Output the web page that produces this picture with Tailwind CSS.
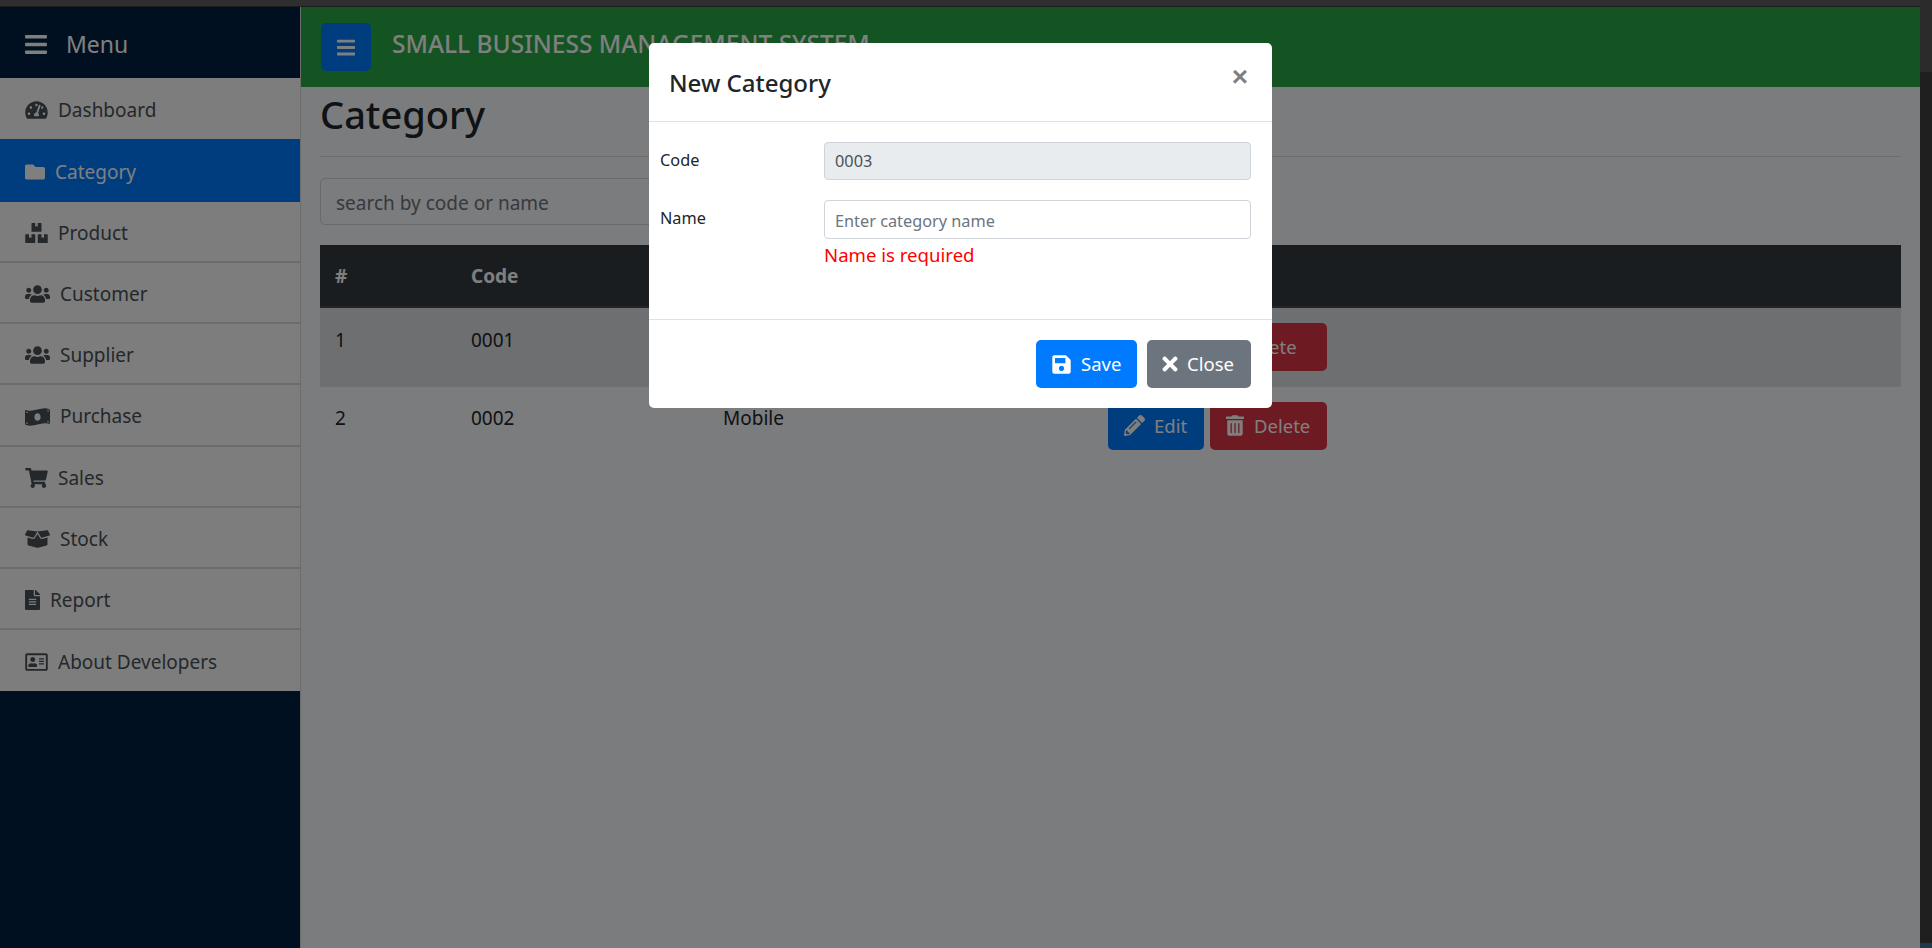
<!DOCTYPE html>
<html lang="en">

<head>
    <meta charset="UTF-8">
    <meta name="viewport" content="width=device-width, initial-scale=1.0">
    <script src="https://cdn.jsdelivr.net/npm/@tailwindcss/browser@4"></script>
    <title>Category</title>
</head>

<body class="font-['Noto_Sans',sans-serif] text-[#212529] bg-white">
    <div class="h-[948px] w-[1932px] overflow-hidden flex">
        <div class="relative w-[1920px] shrink-0 flex flex-col">
            <div class="h-[7px] bg-[#5e5e5e] border-b border-[#3a3a3a]"></div>
            <div class="flex flex-1 min-h-0">
                <!-- sidebar -->
                <aside class="w-[301px] shrink-0 bg-[#002040] border-r border-[#d8d8d8]">
                    <div class="h-[71px] flex items-center pl-[25px] pt-[3px] text-white">
                        <svg class="w-[22px] h-[25px] fill-current" viewBox="0 0 448 512"><path d="M16 132h416c8.837 0 16-7.163 16-16V76c0-8.837-7.163-16-16-16H16C7.163 60 0 67.163 0 76v40c0 8.837 7.163 16 16 16zm0 160h416c8.837 0 16-7.163 16-16v-40c0-8.837-7.163-16-16-16H16c-8.837 0-16 7.163-16 16v40c0 8.837 7.163 16 16 16zm0 160h416c8.837 0 16-7.163 16-16v-40c0-8.837-7.163-16-16-16H16c-8.837 0-16 7.163-16 16v40c0 8.837 7.163 16 16 16z"/></svg>
                        <span class="ml-[19px] text-[23px]">Menu</span>
                    </div>
                    <nav class="text-[19px] text-[#495057]">
                        <a class="h-[61px] flex items-center pl-[25px] pt-[3px] bg-[#fbfbfb] gap-[10px]">
                            <svg class="w-[23px] h-[20px] fill-current" viewBox="0 0 576 512"><path d="M288 32C128.94 32 0 160.94 0 320c0 52.8 14.25 102.26 39.06 144.8 5.61 9.62 16.3 15.2 27.44 15.2h443c11.14 0 21.83-5.58 27.44-15.2C561.75 422.26 576 372.8 576 320c0-159.06-128.94-288-288-288zm0 64c14.71 0 26.58 10.13 30.32 23.65-1.11 2.26-2.64 4.23-3.45 6.67l-9.22 27.67c-5.13 3.49-10.97 6.01-17.64 6.01-17.67 0-32-14.33-32-32S270.33 96 288 96zM96 384c-17.67 0-32-14.33-32-32s14.33-32 32-32 32 14.33 32 32-14.33 32-32 32zm48-160c-17.67 0-32-14.33-32-32s14.33-32 32-32 32 14.33 32 32-14.33 32-32 32zm246.77-72.41l-61.33 184C343.13 347.33 352 364.54 352 384c0 11.72-3.38 22.55-8.88 32H232.88c-5.5-9.45-8.88-20.28-8.88-32 0-33.94 26.5-61.43 59.9-63.59l61.34-184.01c4.17-12.56 17.73-19.45 30.36-15.17 12.57 4.19 19.35 17.79 15.17 30.36zm14.66 57.2l15.52-46.55c3.47-1.29 7.13-2.23 11.05-2.23 17.67 0 32 14.33 32 32s-14.33 32-32 32c-11.38-.01-20.89-6.28-26.57-15.22zM480 384c-17.67 0-32-14.33-32-32s14.33-32 32-32 32 14.33 32 32-14.33 32-32 32z"/></svg>
                            <span>Dashboard</span>
                        </a>
                        <a class="h-[63px] flex items-center pl-[25px] pt-[3px] bg-[#007bff] text-white gap-[10px]">
                            <svg class="w-[20px] h-[20px] fill-current" viewBox="0 0 512 512"><path d="M464 128H272l-64-64H48C21.49 64 0 85.49 0 112v288c0 26.51 21.49 48 48 48h416c26.51 0 48-21.49 48-48V176c0-26.51-21.49-48-48-48z"/></svg>
                            <span>Category</span>
                        </a>
                        <a class="h-[61px] flex items-center pl-[25px] pt-[3px] bg-[#fbfbfb] border-b-2 border-[#d8d8d8] gap-[10px]">
                            <svg class="w-[23px] h-[20px] fill-current" viewBox="0 0 576 512"><path d="M560 288h-80v96l-32-21.3-32 21.3v-96h-80c-8.8 0-16 7.2-16 16v192c0 8.8 7.2 16 16 16h224c8.8 0 16-7.2 16-16V304c0-8.8-7.2-16-16-16zm-384-64h224c8.8 0 16-7.2 16-16V16c0-8.8-7.2-16-16-16h-80v96l-32-21.3L256 96V0h-80c-8.8 0-16 7.2-16 16v192c0 8.8 7.2 16 16 16zm64 64h-80v96l-32-21.3L96 384v-96H16c-8.8 0-16 7.2-16 16v192c0 8.8 7.2 16 16 16h224c8.8 0 16-7.2 16-16V304c0-8.8-7.2-16-16-16z"/></svg>
                            <span>Product</span>
                        </a>
                        <a class="h-[61px] flex items-center pl-[25px] pt-[3px] bg-[#fbfbfb] border-b-2 border-[#d8d8d8] gap-[10px]">
                            <svg class="w-[25px] h-[20px] fill-current" viewBox="0 0 640 512"><path d="M96 224c35.3 0 64-28.7 64-64s-28.7-64-64-64-64 28.7-64 64 28.7 64 64 64zm448 0c35.3 0 64-28.7 64-64s-28.7-64-64-64-64 28.7-64 64 28.7 64 64 64zm32 32h-64c-17.6 0-33.5 7.1-45.1 18.6 40.3 22.1 68.9 62 75.1 109.4h66c17.7 0 32-14.3 32-32v-32c0-35.3-28.7-64-64-64zm-256 0c61.9 0 112-50.1 112-112S381.9 32 320 32 208 82.1 208 144s50.1 112 112 112zm76.8 32h-8.3c-20.8 10-43.9 16-68.5 16s-47.6-6-68.5-16h-8.3C179.6 288 128 339.6 128 403.2V432c0 26.5 21.5 48 48 48h288c26.5 0 48-21.5 48-48v-28.8c0-63.6-51.6-115.2-115.2-115.2zm-223.7-13.4C161.5 263.1 145.6 256 128 256H64c-35.3 0-64 28.7-64 64v32c0 17.7 14.3 32 32 32h65.9c6.3-47.4 34.9-87.3 75.2-109.4z"/></svg>
                            <span>Customer</span>
                        </a>
                        <a class="h-[61px] flex items-center pl-[25px] pt-[3px] bg-[#fbfbfb] border-b-2 border-[#d8d8d8] gap-[10px]">
                            <svg class="w-[25px] h-[20px] fill-current" viewBox="0 0 640 512"><path d="M96 224c35.3 0 64-28.7 64-64s-28.7-64-64-64-64 28.7-64 64 28.7 64 64 64zm448 0c35.3 0 64-28.7 64-64s-28.7-64-64-64-64 28.7-64 64 28.7 64 64 64zm32 32h-64c-17.6 0-33.5 7.1-45.1 18.6 40.3 22.1 68.9 62 75.1 109.4h66c17.7 0 32-14.3 32-32v-32c0-35.3-28.7-64-64-64zm-256 0c61.9 0 112-50.1 112-112S381.9 32 320 32 208 82.1 208 144s50.1 112 112 112zm76.8 32h-8.3c-20.8 10-43.9 16-68.5 16s-47.6-6-68.5-16h-8.3C179.6 288 128 339.6 128 403.2V432c0 26.5 21.5 48 48 48h288c26.5 0 48-21.5 48-48v-28.8c0-63.6-51.6-115.2-115.2-115.2zm-223.7-13.4C161.5 263.1 145.6 256 128 256H64c-35.3 0-64 28.7-64 64v32c0 17.7 14.3 32 32 32h65.9c6.3-47.4 34.9-87.3 75.2-109.4z"/></svg>
                            <span>Supplier</span>
                        </a>
                        <a class="h-[62px] flex items-center pl-[25px] pt-[3px] bg-[#fbfbfb] border-b-2 border-[#d8d8d8] gap-[10px]">
                            <svg class="w-[25px] h-[20px] fill-current" viewBox="0 0 640 512"><path d="M621.16 54.46C582.37 38.19 543.55 32 504.75 32c-123.17-.01-246.33 62.34-369.5 62.34-30.89 0-61.76-3.92-92.65-13.72-3.47-1.1-6.95-1.62-10.35-1.62C15.04 79 0 92.32 0 110.81v317.26c0 12.63 7.23 24.6 18.84 29.46C57.63 473.81 96.45 480 135.25 480c123.17 0 246.34-62.35 369.51-62.35 30.89 0 61.76 3.92 92.65 13.72 3.47 1.1 6.95 1.62 10.35 1.62 17.21 0 32.25-13.32 32.25-31.81V83.93c-.01-12.64-7.24-24.6-18.85-29.47zM320 352c-44.19 0-80-42.99-80-96 0-53.02 35.82-96 80-96s80 42.98 80 96c0 53.03-35.83 96-80 96z"/><g class="fill-[#fbfbfb]"><circle cx="50" cy="135" r="20"/><circle cx="590" cy="95" r="20"/><circle cx="50" cy="415" r="20"/><circle cx="590" cy="380" r="20"/></g></svg>
                            <span>Purchase</span>
                        </a>
                        <a class="h-[61px] flex items-center pl-[25px] pt-[3px] bg-[#fbfbfb] border-b-2 border-[#d8d8d8] gap-[10px]">
                            <svg class="w-[23px] h-[20px] fill-current" viewBox="0 0 576 512"><path d="M528.12 301.319l47.273-208C578.806 78.301 567.391 64 551.99 64H159.208l-9.166-44.81C147.758 8.021 137.93 0 126.529 0H24C10.745 0 0 10.745 0 24v16c0 13.255 10.745 24 24 24h69.883l70.248 343.435C147.325 417.1 136 435.222 136 456c0 30.928 25.072 56 56 56s56-25.072 56-56c0-15.674-6.447-29.835-16.824-40h209.647C430.447 426.165 424 440.326 424 456c0 30.928 25.072 56 56 56s56-25.072 56-56c0-22.172-12.888-41.332-31.579-50.405l5.517-24.276c3.413-15.018-8.002-29.319-23.403-29.319H218.117l-6.545-32h293.145c11.206 0 20.92-7.754 23.403-18.681z"/></svg>
                            <span>Sales</span>
                        </a>
                        <a class="h-[61px] flex items-center pl-[25px] pt-[3px] bg-[#fbfbfb] border-b-2 border-[#d8d8d8] gap-[10px]">
                            <svg class="w-[25px] h-[20px] fill-current" viewBox="0 0 640 512"><path d="M425.7 256c-16.9 0-32.8-9-41.4-23.4L320 126l-64.2 106.6c-8.7 14.5-24.6 23.5-41.5 23.5-4.5 0-9-.6-13.3-1.9L64 215v178c0 14.7 10 27.5 24.2 31l216.2 54.1c10.2 2.5 20.9 2.5 31 0L551.8 424c14.2-3.6 24.2-16.4 24.2-31V215l-137 39.1c-4.3 1.3-8.8 1.9-13.3 1.9zm212.6-112.2L586.8 41c-3.1-6.2-9.8-9.8-16.7-8.9L320 64l91.7 152.1c3.8 6.3 11.4 9.3 18.5 7.3l197.9-56.5c9.9-2.9 14.7-13.9 10.2-23.1zM53.2 41L1.7 143.8c-4.6 9.2.3 20.2 10.1 23l197.9 56.5c7.1 2 14.7-1 18.5-7.3L320 64 69.8 32.1c-6.9-.8-13.5 2.7-16.6 8.9z"/></svg>
                            <span>Stock</span>
                        </a>
                        <a class="h-[61px] flex items-center pl-[25px] pt-[3px] bg-[#fbfbfb] border-b-2 border-[#d8d8d8] gap-[10px]">
                            <svg class="w-[15px] h-[20px] fill-current" viewBox="0 0 384 512"><path d="M224 136V0H24C10.7 0 0 10.7 0 24v464c0 13.3 10.7 24 24 24h336c13.3 0 24-10.7 24-24V160H248c-13.2 0-24-10.8-24-24zm64 236c0 6.6-5.4 12-12 12H108c-6.6 0-12-5.4-12-12v-8c0-6.6 5.4-12 12-12h168c6.6 0 12 5.4 12 12v8zm0-64c0 6.6-5.4 12-12 12H108c-6.6 0-12-5.4-12-12v-8c0-6.6 5.4-12 12-12h168c6.6 0 12 5.4 12 12v8zm0-72v8c0 6.6-5.4 12-12 12H108c-6.6 0-12-5.4-12-12v-8c0-6.6 5.4-12 12-12h168c6.6 0 12 5.4 12 12zm96-114.1v6.1H256V0h6.1c6.4 0 12.5 2.5 17 7l97.9 98c4.5 4.5 7 10.6 7 16.9z"/></svg>
                            <span>Report</span>
                        </a>
                        <a class="h-[61px] flex items-center pl-[25px] pt-[3px] bg-[#fbfbfb] gap-[10px]">
                            <svg class="w-[23px] h-[20px] fill-current" viewBox="0 0 576 512"><path d="M528 32H48C21.5 32 0 53.5 0 80v352c0 26.5 21.5 48 48 48h480c26.5 0 48-21.5 48-48V80c0-26.5-21.5-48-48-48zm-6 400H54c-3.3 0-6-2.7-6-6V86c0-3.3 2.7-6 6-6h468c3.3 0 6 2.7 6 6v340c0 3.3-2.7 6-6 6zM192 256c35.3 0 64-28.7 64-64s-28.7-64-64-64-64 28.7-64 64 28.7 64 64 64zm-89.6 128h179.2c12.4 0 22.4-8.6 22.4-19.2v-19.2c0-31.8-30.1-57.6-67.2-57.6-10.8 0-18.7 8-44.8 8-26.9 0-33.4-8-44.8-8-37.1 0-67.2 25.8-67.2 57.6v19.2c0 10.6 10 19.2 22.4 19.2zM360 320h112c4.4 0 8-3.6 8-8v-16c0-4.4-3.6-8-8-8H360c-4.4 0-8 3.6-8 8v16c0 4.4 3.6 8 8 8zm0-64h112c4.4 0 8-3.6 8-8v-16c0-4.4-3.6-8-8-8H360c-4.4 0-8 3.6-8 8v16c0 4.4 3.6 8 8 8zm0-64h112c4.4 0 8-3.6 8-8v-16c0-4.4-3.6-8-8-8H360c-4.4 0-8 3.6-8 8v16c0 4.4 3.6 8 8 8z"/></svg>
                            <span>About Developers</span>
                        </a>
                    </nav>
                </aside>

                <!-- main -->
                <main class="flex-1 min-w-0 bg-[#f6f8fb]">
                    <header class="h-[80px] bg-[#28a745] flex items-center pl-[20px] text-white">
                        <button class="w-[50px] h-[48px] bg-[#007bff] rounded-[5px] flex items-center justify-center">
                            <svg class="w-[18px] h-[21px] fill-current" viewBox="0 0 448 512"><path d="M16 132h416c8.837 0 16-7.163 16-16V76c0-8.837-7.163-16-16-16H16C7.163 60 0 67.163 0 76v40c0 8.837 7.163 16 16 16zm0 160h416c8.837 0 16-7.163 16-16v-40c0-8.837-7.163-16-16-16H16c-8.837 0-16 7.163-16 16v40c0 8.837 7.163 16 16 16zm0 160h416c8.837 0 16-7.163 16-16v-40c0-8.837-7.163-16-16-16H16c-8.837 0-16 7.163-16 16v40c0 8.837 7.163 16 16 16z"/></svg>
                        </button>
                        <span class="ml-[21px] text-[24.5px] font-medium -mt-[6px]">SMALL BUSINESS MANAGEMENT SYSTEM</span>
                    </header>
                    <div class="pl-[19px] pr-[19px]">
                        <h1 class="text-[38px] leading-[56px] font-medium mt-[-1px]">Category</h1>
                        <hr class="mt-[14px] border-[#dcdcdc]">
                        <input class="mt-[21px] block w-[600px] h-[47px] border border-[#ced4da] rounded-[5px] px-[15px] pt-[2px] text-[19px] placeholder:text-[#6c757d]" placeholder="search by code or name">
                        <table class="mt-[20px] w-full table-fixed text-[19px]">
                            <thead class="bg-[#343a40] text-white">
                                <tr class="h-[62px] text-left border-b-2 border-[#454d55]">
                                    <th class="w-[136px] pl-[15px] pt-[2px] font-bold">#</th>
                                    <th class="w-[252px] pl-[15px] pt-[2px] font-bold">Code</th>
                                    <th class="w-[385px] pl-[15px] pt-[2px] font-bold">Name</th>
                                    <th class="pl-[15px] pt-[2px] font-bold">Action</th>
                                </tr>
                            </thead>
                            <tbody>
                                <tr class="h-[79px] bg-black/10 border-b border-[#dee2e6]">
                                    <td class="pl-[15px] align-top pt-[18px]">1</td>
                                    <td class="pl-[15px] align-top pt-[18px]">0001</td>
                                    <td class="pl-[15px] align-top pt-[18px]">Computer</td>
                                    <td class="pl-[15px] align-top pt-[15px]">
                                        <div class="flex gap-[6px] text-[18.5px]">
                                            <button class="w-[96px] h-[48px] bg-[#007bff] text-white rounded-[5px]">Edit</button>
                                            <button class="w-[117px] h-[48px] bg-[#dc3545] text-white rounded-[5px]">Delete</button>
                                        </div>
                                    </td>
                                </tr>
                                <tr class="h-[79px]">
                                    <td class="pl-[15px] align-top pt-[17px]">2</td>
                                    <td class="pl-[15px] align-top pt-[17px]">0002</td>
                                    <td class="pl-[15px] align-top pt-[17px]">Mobile</td>
                                    <td class="pl-[15px] align-top pt-[15px]">
                                        <div class="flex gap-[6px] text-[18.5px]">
                                            <button class="w-[96px] h-[48px] pl-[16px] bg-[#007bff] text-white rounded-[5px] flex items-center gap-[9px]">
                                                <svg class="w-[21px] h-[21px] fill-current" viewBox="0 0 512 512"><path d="M497.9 142.1l-46.1 46.1c-4.7 4.7-12.3 4.7-17 0l-111-111c-4.7-4.7-4.7-12.3 0-17l46.1-46.1c18.7-18.7 49.1-18.7 67.9 0l60.1 60.1c18.8 18.7 18.8 49.1 0 67.9zM284.2 99.8L21.6 362.4.4 483.9c-2.9 16.4 11.4 30.6 27.8 27.8l121.5-21.3 262.6-262.6c4.7-4.7 4.7-12.3 0-17l-111-111c-4.8-4.7-12.4-4.7-17.1 0zM124.1 339.9c-5.5-5.5-5.5-14.3 0-19.8l154-154c5.5-5.5 14.3-5.5 19.8 0s5.5 14.3 0 19.8l-154 154c-5.5 5.5-14.3 5.5-19.8 0zM88 424h48v36.3l-64.5 11.3-31.1-31.1L51.7 376H88v48z"/></svg>
                                                Edit
                                            </button>
                                            <button class="w-[117px] h-[48px] pl-[16px] bg-[#dc3545] text-white rounded-[5px] flex items-center gap-[10px]">
                                                <svg class="w-[18px] h-[21px] fill-current" viewBox="0 0 448 512"><path d="M32 464a48 48 0 0 0 48 48h288a48 48 0 0 0 48-48V128H32zm272-256a16 16 0 0 1 32 0v224a16 16 0 0 1-32 0zm-96 0a16 16 0 0 1 32 0v224a16 16 0 0 1-32 0zm-96 0a16 16 0 0 1 32 0v224a16 16 0 0 1-32 0zM432 32H312l-9.4-18.7A24 24 0 0 0 281.1 0H166.8a23.72 23.72 0 0 0-21.4 13.3L136 32H16A16 16 0 0 0 0 48v32a16 16 0 0 0 16 16h416a16 16 0 0 0 16-16V48a16 16 0 0 0-16-16z"/></svg>
                                                Delete
                                            </button>
                                        </div>
                                    </td>
                                </tr>
                            </tbody>
                        </table>
                    </div>
                </main>
            </div>

            <!-- backdrop + modal -->
            <div class="absolute inset-0 bg-black/50"></div>
            <div class="absolute left-[649px] top-[43px] w-[623px] h-[365px] bg-white rounded-[5px] flex flex-col">
                <div class="h-[79px] border-b border-[#dee2e6] flex items-start justify-between pl-[20px] pr-[24px] pt-[22px] shrink-0">
                    <h5 class="text-[24px] leading-[36px] font-medium">New Category</h5>
                    <span class="font-['Liberation_Sans',sans-serif] text-[28px] leading-[28px] font-bold text-black/50 -mt-[2px]">×</span>
                </div>
                <div class="flex-1 pl-[11px] pr-[21px] pt-[20px] text-[16.3px]">
                    <div class="flex">
                        <label class="w-[164px] shrink-0 pt-[6px] leading-[24px]">Code</label>
                        <input class="flex-1 min-w-0 h-[38px] border border-[#ced4da] rounded-[4px] px-[10px] bg-[#e9ecef] text-[#495057] text-[16.3px]" value="0003" disabled>
                    </div>
                    <div class="flex mt-[20px]">
                        <label class="w-[164px] shrink-0 pt-[6px] leading-[24px]">Name</label>
                        <div class="flex-1 min-w-0">
                            <input class="block w-full h-[39px] border border-[#ced4da] rounded-[4px] px-[10px] pt-[2px] text-[16.3px] placeholder:text-[#6c757d]" placeholder="Enter category name">
                            <div class="text-[18.6px] leading-[27px] mt-[2px] text-[#ff0000]">Name is required</div>
                        </div>
                    </div>
                </div>
                <div class="h-[89px] border-t border-[#dee2e6] flex justify-end gap-[10px] pt-[20px] pr-[21px] shrink-0 text-[18.5px] text-white">
                    <button class="w-[101px] h-[48px] pl-[16px] bg-[#007bff] rounded-[5px] flex items-center gap-[10px]">
                        <svg class="w-[19px] h-[21px] fill-current" viewBox="0 0 448 512"><path d="M433.941 129.941l-83.882-83.882A48 48 0 0 0 316.118 32H48C21.49 32 0 53.49 0 80v352c0 26.51 21.49 48 48 48h352c26.51 0 48-21.49 48-48V163.882a48 48 0 0 0-14.059-33.941zM224 416c-35.346 0-64-28.654-64-64 0-35.346 28.654-64 64-64s64 28.654 64 64c0 35.346-28.654 64-64 64zm96-304.52V212c0 6.627-5.373 12-12 12H76c-6.627 0-12-5.373-12-12V108c0-6.627 5.373-12 12-12h228.52c3.183 0 6.235 1.264 8.485 3.515l3.48 3.48A11.996 11.996 0 0 1 320 111.48z"/></svg>
                        Save
                    </button>
                    <button class="w-[104px] h-[48px] pl-[15px] bg-[#6c757d] rounded-[5px] flex items-center gap-[9px]">
                        <svg class="w-[16px] h-[22px] fill-current" viewBox="0 0 352 512"><path d="M242.72 256l100.07-100.07c12.28-12.28 12.28-32.19 0-44.48l-22.24-22.24c-12.28-12.28-32.19-12.28-44.48 0L176 189.28 75.93 89.21c-12.28-12.28-32.19-12.28-44.48 0L9.21 111.45c-12.28 12.28-12.28 32.19 0 44.48L109.28 256 9.21 356.07c-12.28 12.28-12.28 32.19 0 44.48l22.24 22.24c12.28 12.28 32.2 12.28 44.48 0L176 322.72l100.07 100.07c12.28 12.28 32.2 12.28 44.48 0l22.24-22.24c12.28-12.28 12.28-32.19 0-44.48L242.72 256z"/></svg>
                        Close
                    </button>
                </div>
            </div>
        </div>

        <!-- dark strip right of the page -->
        <div class="w-[12px] shrink-0 flex flex-col bg-[#1f1f1f]">
            <div class="h-[72px] bg-[#2b2b2b]"></div>
            <div class="flex-1"></div>
            <div class="h-[5px] bg-[#1e3a4a]"></div>
        </div>
    </div>
</body>

</html>
